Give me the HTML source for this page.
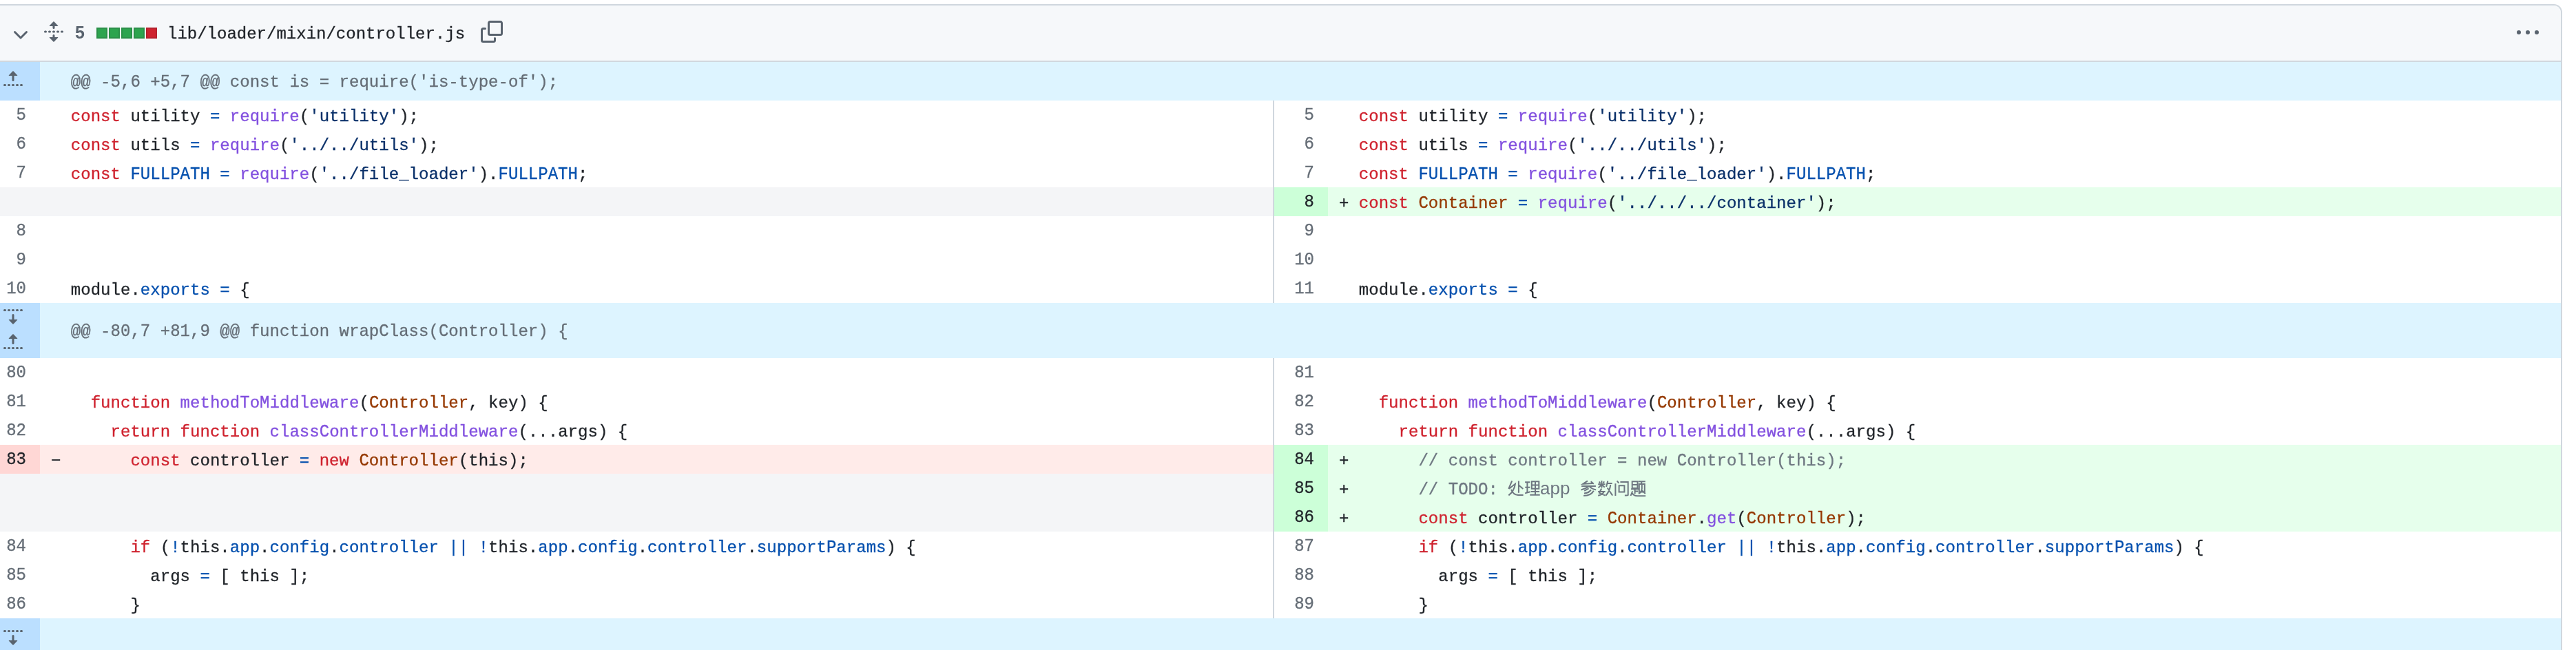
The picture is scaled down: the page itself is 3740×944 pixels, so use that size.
<!DOCTYPE html>
<html><head><meta charset="utf-8"><style>
html,body{margin:0;padding:0;background:#fff;}
body{width:3740px;height:944px;overflow:hidden;position:relative;}
#frame{position:absolute;left:-22px;top:6px;width:3742px;height:1100px;border:2px solid #d0d7de;border-radius:12px;overflow:hidden;box-sizing:border-box;}
#inner{position:absolute;left:20px;top:-8px;width:3740px;height:1100px;will-change:transform;}
.bg{position:absolute;}
.ic{position:absolute;display:block;}
.code,.num,.mark,.hunk,.path{position:absolute;font-family:"Liberation Mono",monospace;font-size:24px;white-space:pre;color:#1f2328;-webkit-text-stroke:0.3px currentColor;}
.code{letter-spacing:0.032px;height:42px;line-height:42px;padding-top:3px;box-sizing:border-box;}
.mark{height:42px;line-height:42px;padding-top:3px;box-sizing:border-box;}
.num{width:78px;height:42px;line-height:42px;text-align:right;padding-right:20px;box-sizing:border-box;color:#656d76;padding-top:1px;transform:scaleY(1.08);transform-origin:0 28.4px;}
.numd{color:#1f2328;}
.hunk{letter-spacing:0.032px;color:#656d76;padding-top:2px;box-sizing:border-box;}
.path{height:80px;line-height:80px;padding-top:2px;box-sizing:border-box;}
.stat{position:absolute;font-family:"Liberation Sans",sans-serif;font-weight:bold;font-size:25px;color:#59636e;height:80px;line-height:80px;margin-top:-1px;box-sizing:border-box;}
.sq{position:absolute;width:16px;height:16px;box-sizing:border-box;border:2px solid rgba(31,35,40,0.15);}
.sqg{background:#2da44e;}
.sqr{background:#cf222e;}
.cap{display:inline-block;line-height:24px;transform:scaleY(1.08);transform-origin:50% 18.4px;}
.k{color:#cf222e}.c1{color:#0550ae}.en{color:#8250df}.s{color:#0a3069}.v{color:#953800}.c{color:#6e7781}
.app{position:absolute;font-family:"Liberation Sans",sans-serif;font-size:26px;color:#6e7781;height:42px;line-height:42px;padding-top:3px;box-sizing:border-box;white-space:pre;}
.cjk{position:absolute;fill:none;stroke:#6e7781;stroke-width:2;stroke-linecap:butt;stroke-linejoin:miter;}
</style></head><body><div id="frame"><div id="inner">
<div class="bg" style="left:-20px;top:8px;width:3738px;height:80px;background:#f6f8fa"></div>
<div class="bg" style="left:-20px;top:88px;width:3738px;height:2px;background:#d0d7de"></div>
<svg class="ic" style="left:13.5px;top:34.5px" width="32" height="32" viewBox="0 0 16 16" fill="#59636e"><path d="M12.78 5.22a.749.749 0 0 1 0 1.06l-4.25 4.25a.749.749 0 0 1-1.06 0L3.22 6.28a.749.749 0 1 1 1.06-1.06L8 8.939l3.72-3.719a.749.749 0 0 1 1.06 0Z"/></svg>
<svg class="ic" style="left:62px;top:30px" width="32" height="32" viewBox="0 0 16 16" fill="#59636e"><path d="m8.177.677 2.896 2.896a.25.25 0 0 1-.177.427H8.75v1.25a.75.75 0 0 1-1.5 0V4H5.104a.25.25 0 0 1-.177-.427L7.823.677a.25.25 0 0 1 .354 0ZM7.25 10.75a.75.75 0 0 1 1.5 0V12h2.146a.25.25 0 0 1 .177.427l-2.896 2.896a.25.25 0 0 1-.354 0l-2.896-2.896A.25.25 0 0 1 5.104 12H7.25v-1.25Zm-5-2a.75.75 0 0 0 0-1.5h-.5a.75.75 0 0 0 0 1.5h.5ZM6 8a.75.75 0 0 1-.75.75h-.5a.75.75 0 0 1 0-1.5h.5A.75.75 0 0 1 6 8Zm2.25.75a.75.75 0 0 0 0-1.5h-.5a.75.75 0 0 0 0 1.5h.5ZM12 8a.75.75 0 0 1-.75.75h-.5a.75.75 0 0 1 0-1.5h.5A.75.75 0 0 1 12 8Zm2.25.75a.75.75 0 0 0 0-1.5h-.5a.75.75 0 0 0 0 1.5h.5Z"/></svg>
<div class="stat" style="left:109px;top:8px">5</div>
<div class="sq sqg" style="left:140px;top:40px"></div>
<div class="sq sqg" style="left:158px;top:40px"></div>
<div class="sq sqg" style="left:176px;top:40px"></div>
<div class="sq sqg" style="left:194px;top:40px"></div>
<div class="sq sqr" style="left:212px;top:40px"></div>
<div class="path" style="left:243px;top:8px">lib/loader/mixin/controller.js</div>
<svg class="ic" style="left:698px;top:30px" width="32" height="32" viewBox="0 0 16 16" fill="#59636e"><path d="M0 6.75C0 5.784.784 5 1.75 5h1.5a.75.75 0 0 1 0 1.5h-1.5a.25.25 0 0 0-.25.25v7.5c0 .138.112.25.25.25h7.5a.25.25 0 0 0 .25-.25v-1.5a.75.75 0 0 1 1.5 0v1.5A1.75 1.75 0 0 1 9.25 16h-7.5A1.75 1.75 0 0 1 0 14.25Z"/><path d="M5 1.75C5 .784 5.784 0 6.75 0h7.5C15.216 0 16 .784 16 1.75v7.5A1.75 1.75 0 0 1 14.25 11h-7.5A1.75 1.75 0 0 1 5 9.25Zm1.75-.25a.25.25 0 0 0-.25.25v7.5c0 .138.112.25.25.25h7.5a.25.25 0 0 0 .25-.25v-7.5a.25.25 0 0 0-.25-.25Z"/></svg>
<svg class="ic" style="left:3654px;top:32px" width="32" height="32" viewBox="0 0 16 16" fill="#59636e"><path d="M8 9a1.5 1.5 0 1 0 0-3 1.5 1.5 0 0 0 0 3ZM1.5 9a1.5 1.5 0 1 0 0-3 1.5 1.5 0 0 0 0 3Zm13 0a1.5 1.5 0 1 0 0-3 1.5 1.5 0 0 0 0 3Z"/></svg>
<div class="bg" style="left:-20px;top:90px;width:3738px;height:56px;background:#ddf4ff"></div>
<div class="bg" style="left:-20px;top:90px;width:78px;height:56px;background:#bbdfff"></div>
<svg class="ic" style="left:3px;top:100px" width="32" height="32" viewBox="0 0 16 16" fill="#59636e"><path d="M7.823 1.677 4.927 4.573A.25.25 0 0 0 5.104 5H7.25v3.236a.75.75 0 1 0 1.5 0V5h2.146a.25.25 0 0 0 .177-.427L8.177 1.677a.25.25 0 0 0-.354 0ZM13.75 11a.75.75 0 0 0 0 1.5h.5a.75.75 0 0 0 0-1.5h-.5Zm-3.75.75a.75.75 0 0 1 .75-.75h.5a.75.75 0 0 1 0 1.5h-.5a.75.75 0 0 1-.75-.75ZM7.75 11a.75.75 0 0 0 0 1.5h.5a.75.75 0 0 0 0-1.5h-.5ZM4 11.75a.75.75 0 0 1 .75-.75h.5a.75.75 0 0 1 0 1.5h-.5a.75.75 0 0 1-.75-.75ZM1.75 11a.75.75 0 0 0 0 1.5h.5a.75.75 0 0 0 0-1.5h-.5Z"/></svg>
<div class="hunk" style="left:102.8px;top:90px;height:56px;line-height:56px">@@ -<span class="cap">5</span>,<span class="cap">6</span> +<span class="cap">5</span>,<span class="cap">7</span> @@ const is = require(&#x27;is-type-of&#x27;);</div>
<div class="num" style="left:-20px;top:146px">5</div>
<div class="code" style="left:102.8px;top:146px"><span class="k">const</span> utility <span class="c1">=</span> <span class="en">require</span>(<span class="s">&#x27;utility&#x27;</span>);</div>
<div class="num" style="left:1850px;top:146px">5</div>
<div class="code" style="left:1972.8px;top:146px"><span class="k">const</span> utility <span class="c1">=</span> <span class="en">require</span>(<span class="s">&#x27;utility&#x27;</span>);</div>
<div class="num" style="left:-20px;top:188px">6</div>
<div class="code" style="left:102.8px;top:188px"><span class="k">const</span> utils <span class="c1">=</span> <span class="en">require</span>(<span class="s">&#x27;../../utils&#x27;</span>);</div>
<div class="num" style="left:1850px;top:188px">6</div>
<div class="code" style="left:1972.8px;top:188px"><span class="k">const</span> utils <span class="c1">=</span> <span class="en">require</span>(<span class="s">&#x27;../../utils&#x27;</span>);</div>
<div class="num" style="left:-20px;top:230px">7</div>
<div class="code" style="left:102.8px;top:230px"><span class="k">const</span> <span class="c1"><span class="cap">FULLPATH</span></span> <span class="c1">=</span> <span class="en">require</span>(<span class="s">&#x27;../file_loader&#x27;</span>).<span class="c1"><span class="cap">FULLPATH</span></span>;</div>
<div class="num" style="left:1850px;top:230px">7</div>
<div class="code" style="left:1972.8px;top:230px"><span class="k">const</span> <span class="c1"><span class="cap">FULLPATH</span></span> <span class="c1">=</span> <span class="en">require</span>(<span class="s">&#x27;../file_loader&#x27;</span>).<span class="c1"><span class="cap">FULLPATH</span></span>;</div>
<div class="bg" style="left:-20px;top:272px;width:1868px;height:42px;background:#f4f5f7"></div>
<div class="bg" style="left:1850px;top:272px;width:78px;height:42px;background:#ccffd8"></div>
<div class="bg" style="left:1928px;top:272px;width:1790px;height:42px;background:#e6ffec"></div>
<div class="num numd" style="left:1850px;top:272px">8</div>
<div class="mark" style="left:1944px;top:272px">+</div>
<div class="code" style="left:1972.8px;top:272px"><span class="k">const</span> <span class="v"><span class="cap">C</span>ontainer</span> <span class="c1">=</span> <span class="en">require</span>(<span class="s">&#x27;../../../container&#x27;</span>);</div>
<div class="num" style="left:-20px;top:314px">8</div>
<div class="num" style="left:1850px;top:314px">9</div>
<div class="num" style="left:-20px;top:356px">9</div>
<div class="num" style="left:1850px;top:356px">10</div>
<div class="num" style="left:-20px;top:398px">10</div>
<div class="code" style="left:102.8px;top:398px">module.<span class="c1">exports</span> <span class="c1">=</span> {</div>
<div class="num" style="left:1850px;top:398px">11</div>
<div class="code" style="left:1972.8px;top:398px">module.<span class="c1">exports</span> <span class="c1">=</span> {</div>
<div class="bg" style="left:1848px;top:146px;width:2px;height:294px;background:#d0d7de"></div>
<div class="bg" style="left:-20px;top:440px;width:3738px;height:80px;background:#ddf4ff"></div>
<div class="bg" style="left:-20px;top:440px;width:78px;height:80px;background:#bbdfff"></div>
<svg class="ic" style="left:3px;top:442px" width="32" height="32" viewBox="0 0 16 16" fill="#59636e"><path d="m8.177 14.323 2.896-2.896a.25.25 0 0 0-.177-.427H8.75V7.764a.75.75 0 1 0-1.5 0V11H5.104a.25.25 0 0 0-.177.427l2.896 2.896a.25.25 0 0 0 .354 0ZM2.25 5a.75.75 0 0 0 0-1.5h-.5a.75.75 0 0 0 0 1.5h.5ZM6 4.25a.75.75 0 0 1-.75.75h-.5a.75.75 0 0 1 0-1.5h.5a.75.75 0 0 1 .75.75ZM8.25 5a.75.75 0 0 0 0-1.5h-.5a.75.75 0 0 0 0 1.5h.5ZM12 4.25a.75.75 0 0 1-.75.75h-.5a.75.75 0 0 1 0-1.5h.5a.75.75 0 0 1 .75.75Zm2.25.75a.75.75 0 0 0 0-1.5h-.5a.75.75 0 0 0 0 1.5h.5Z"/></svg>
<svg class="ic" style="left:3px;top:482px" width="32" height="32" viewBox="0 0 16 16" fill="#59636e"><path d="M7.823 1.677 4.927 4.573A.25.25 0 0 0 5.104 5H7.25v3.236a.75.75 0 1 0 1.5 0V5h2.146a.25.25 0 0 0 .177-.427L8.177 1.677a.25.25 0 0 0-.354 0ZM13.75 11a.75.75 0 0 0 0 1.5h.5a.75.75 0 0 0 0-1.5h-.5Zm-3.75.75a.75.75 0 0 1 .75-.75h.5a.75.75 0 0 1 0 1.5h-.5a.75.75 0 0 1-.75-.75ZM7.75 11a.75.75 0 0 0 0 1.5h.5a.75.75 0 0 0 0-1.5h-.5ZM4 11.75a.75.75 0 0 1 .75-.75h.5a.75.75 0 0 1 0 1.5h-.5a.75.75 0 0 1-.75-.75ZM1.75 11a.75.75 0 0 0 0 1.5h.5a.75.75 0 0 0 0-1.5h-.5Z"/></svg>
<div class="hunk" style="left:102.8px;top:440px;height:80px;line-height:80px">@@ -<span class="cap">80</span>,<span class="cap">7</span> +<span class="cap">81</span>,<span class="cap">9</span> @@ function wrap<span class="cap">C</span>lass(<span class="cap">C</span>ontroller) {</div>
<div class="num" style="left:-20px;top:520px">80</div>
<div class="num" style="left:1850px;top:520px">81</div>
<div class="num" style="left:-20px;top:562px">81</div>
<div class="code" style="left:102.8px;top:562px">  <span class="k">function</span> <span class="en">method<span class="cap">T</span>o<span class="cap">M</span>iddleware</span>(<span class="v"><span class="cap">C</span>ontroller</span>, key) {</div>
<div class="num" style="left:1850px;top:562px">82</div>
<div class="code" style="left:1972.8px;top:562px">  <span class="k">function</span> <span class="en">method<span class="cap">T</span>o<span class="cap">M</span>iddleware</span>(<span class="v"><span class="cap">C</span>ontroller</span>, key) {</div>
<div class="num" style="left:-20px;top:604px">82</div>
<div class="code" style="left:102.8px;top:604px">    <span class="k">return</span> <span class="k">function</span> <span class="en">class<span class="cap">C</span>ontroller<span class="cap">M</span>iddleware</span>(...args) {</div>
<div class="num" style="left:1850px;top:604px">83</div>
<div class="code" style="left:1972.8px;top:604px">    <span class="k">return</span> <span class="k">function</span> <span class="en">class<span class="cap">C</span>ontroller<span class="cap">M</span>iddleware</span>(...args) {</div>
<div class="bg" style="left:-20px;top:646px;width:78px;height:42px;background:#ffd7d5"></div>
<div class="bg" style="left:58px;top:646px;width:1790px;height:42px;background:#ffebe9"></div>
<div class="num numd" style="left:-20px;top:646px">83</div>
<div class="mark" style="left:74px;top:646px">&minus;</div>
<div class="code" style="left:102.8px;top:646px">      <span class="k">const</span> controller <span class="c1">=</span> <span class="k">new</span> <span class="v"><span class="cap">C</span>ontroller</span>(this);</div>
<div class="bg" style="left:1850px;top:646px;width:78px;height:42px;background:#ccffd8"></div>
<div class="bg" style="left:1928px;top:646px;width:1790px;height:42px;background:#e6ffec"></div>
<div class="num numd" style="left:1850px;top:646px">84</div>
<div class="mark" style="left:1944px;top:646px">+</div>
<div class="code" style="left:1972.8px;top:646px">      <span class="c">// const controller = new <span class="cap">C</span>ontroller(this);</span></div>
<div class="bg" style="left:-20px;top:688px;width:1868px;height:42px;background:#f4f5f7"></div>
<div class="bg" style="left:1850px;top:688px;width:78px;height:42px;background:#ccffd8"></div>
<div class="bg" style="left:1928px;top:688px;width:1790px;height:42px;background:#e6ffec"></div>
<div class="num numd" style="left:1850px;top:688px">85</div>
<div class="mark" style="left:1944px;top:688px">+</div>
<div class="app" style="left:2236px;top:685px">app</div>
<div class="code" style="left:1972.8px;top:688px">      <span class="c">// <span class="cap">TODO</span>: </span></div>
<div class="bg" style="left:-20px;top:730px;width:1868px;height:42px;background:#f4f5f7"></div>
<div class="bg" style="left:1850px;top:730px;width:78px;height:42px;background:#ccffd8"></div>
<div class="bg" style="left:1928px;top:730px;width:1790px;height:42px;background:#e6ffec"></div>
<div class="num numd" style="left:1850px;top:730px">86</div>
<div class="mark" style="left:1944px;top:730px">+</div>
<div class="code" style="left:1972.8px;top:730px">      <span class="k">const</span> controller <span class="c1">=</span> <span class="v"><span class="cap">C</span>ontainer</span>.<span class="en">get</span>(<span class="v"><span class="cap">C</span>ontroller</span>);</div>
<div class="num" style="left:-20px;top:772px">84</div>
<div class="code" style="left:102.8px;top:772px">      <span class="k">if</span> (<span class="c1">!</span>this.<span class="c1">app</span>.<span class="c1">config</span>.<span class="c1">controller</span> <span class="c1">||</span> <span class="c1">!</span>this.<span class="c1">app</span>.<span class="c1">config</span>.<span class="c1">controller</span>.<span class="c1">support<span class="cap">P</span>arams</span>) {</div>
<div class="num" style="left:1850px;top:772px">87</div>
<div class="code" style="left:1972.8px;top:772px">      <span class="k">if</span> (<span class="c1">!</span>this.<span class="c1">app</span>.<span class="c1">config</span>.<span class="c1">controller</span> <span class="c1">||</span> <span class="c1">!</span>this.<span class="c1">app</span>.<span class="c1">config</span>.<span class="c1">controller</span>.<span class="c1">support<span class="cap">P</span>arams</span>) {</div>
<div class="num" style="left:-20px;top:814px">85</div>
<div class="code" style="left:102.8px;top:814px">        args <span class="c1">=</span> [ this ];</div>
<div class="num" style="left:1850px;top:814px">88</div>
<div class="code" style="left:1972.8px;top:814px">        args <span class="c1">=</span> [ this ];</div>
<div class="num" style="left:-20px;top:856px">86</div>
<div class="code" style="left:102.8px;top:856px">      }</div>
<div class="num" style="left:1850px;top:856px">89</div>
<div class="code" style="left:1972.8px;top:856px">      }</div>
<div class="bg" style="left:1848px;top:520px;width:2px;height:378px;background:#d0d7de"></div>
<div class="bg" style="left:-20px;top:898px;width:3738px;height:80px;background:#ddf4ff"></div>
<div class="bg" style="left:-20px;top:898px;width:78px;height:80px;background:#bbdfff"></div>
<svg class="ic" style="left:3px;top:908px" width="32" height="32" viewBox="0 0 16 16" fill="#59636e"><path d="m8.177 14.323 2.896-2.896a.25.25 0 0 0-.177-.427H8.75V7.764a.75.75 0 1 0-1.5 0V11H5.104a.25.25 0 0 0-.177.427l2.896 2.896a.25.25 0 0 0 .354 0ZM2.25 5a.75.75 0 0 0 0-1.5h-.5a.75.75 0 0 0 0 1.5h.5ZM6 4.25a.75.75 0 0 1-.75.75h-.5a.75.75 0 0 1 0-1.5h.5a.75.75 0 0 1 .75.75ZM8.25 5a.75.75 0 0 0 0-1.5h-.5a.75.75 0 0 0 0 1.5h.5ZM12 4.25a.75.75 0 0 1-.75.75h-.5a.75.75 0 0 1 0-1.5h.5a.75.75 0 0 1 .75.75Zm2.25.75a.75.75 0 0 0 0-1.5h-.5a.75.75 0 0 0 0 1.5h.5Z"/></svg>
<svg class="cjk" style="left:2188px;top:696px" width="24" height="26" viewBox="0 0 24 26"><path d="M7.2 2.4 2.3 14 M3.1 13.7 11.9 6.8 Q10.5 17 2.3 23.4 M6 14.8 Q9 22.6 16 22.9 L23.6 23 M16.9 2.4V19.8 M17.5 9 23.3 14"/></svg>
<svg class="cjk" style="left:2212px;top:696px" width="24" height="26" viewBox="0 0 24 26"><path d="M2.1 4.3H9.3 M2.3 11.8H9.3 M5.4 4.3V19.3 M2.1 20.4 9.6 18.2 M11.8 3.2H22.3V13.7H11.8Z M17 3.2V22.8 M11.8 8.5H22.3 M10.6 17.9H23.1 M9.3 22.8H23.7"/></svg>
<svg class="cjk" style="left:2294px;top:696px" width="24" height="26" viewBox="0 0 24 26"><path d="M10.9 2.4 4.3 6.8 18.2 6 M15.7 3.2 19.8 6.8 M2.1 10.1H22.9 M12.5 10.4Q8 14 1.5 15.4 M13.8 10.6Q17 14 23.1 15.4 M12.6 13.4 6.2 16.8 M15.9 15.4Q13 20 6 20.4 M19.8 16.8Q16 24 5.1 24"/></svg>
<svg class="cjk" style="left:2318px;top:696px" width="24" height="26" viewBox="0 0 24 26"><path d="M7.4 2.1V12.6 M2.2 7.3H12.6 M3.8 3.4 5.2 5.7 M11.1 3.2 9.6 5.7 M7.2 8 2.6 12.4 M7.6 8 11.8 11.7 M2.2 17.9H12.6 M7.2 13.4Q5.2 17 4 19.8 Q9 22 12.6 23.6 M10.6 18.2Q9 22.5 2.2 23.8 M16.3 2.4 14.1 11 M14.5 6H22.7 M20.3 8Q19 18 13.3 23.7 M15.7 12.5 23.2 23.6"/></svg>
<svg class="cjk" style="left:2342px;top:696px" width="24" height="26" viewBox="0 0 24 26"><path d="M5.6 2.4 8.4 5.6 M3.4 6.2V24 M10.4 4H21.7V23.3Q21.7 23.6 16.9 23.6 M8.6 9.2H16.4V18.4H8.6Z"/></svg>
<svg class="cjk" style="left:2366px;top:696px" width="24" height="26" viewBox="0 0 24 26"><path d="M3.7 3.2H11.5V13H3.7Z M3.7 7.9H11.5 M2.1 14.2H13.2 M7.6 14.2V21 M7.6 17.6H12.2 M4.2 17.3 1.5 24 M3.8 20.2Q6 24 11 24.2 L23.2 24.2 M12.8 3.2H22.8 M17.7 3.2 16.6 6.9 M13.8 6.9H21.8V18.4H13.8Z M17.8 6.9V14 Q17 19 13 21 M18.2 16.5 22.8 21"/></svg>
</div></div></body></html>
